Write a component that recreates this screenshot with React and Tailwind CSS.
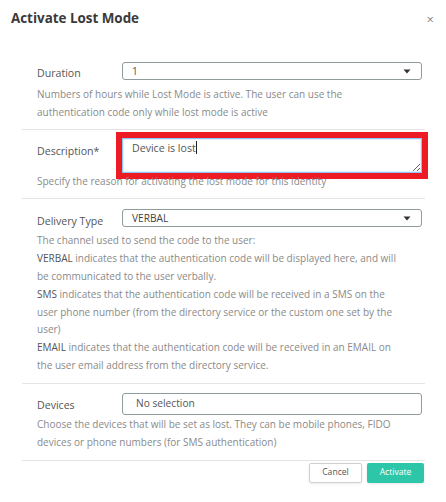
import React from "react";

function Caret() {
  return (
    <svg width="8" height="5" viewBox="0 0 8 5" className="shrink-0">
      <path d="M0.5 0.5 L7.5 0.5 L4 4.5 Z" fill="#333" />
    </svg>
  );
}

function Select({ value, bold }) {
  return (
    <div className="flex-1 h-[18px] border border-[#8e9c9c] rounded-[3px] flex items-center justify-between pl-[9px] pr-[10px] bg-white">
      <span className={`text-[10.2px] leading-[16px] ${bold ? "text-[#444]" : "text-[#555]"}`}>{value}</span>
      <Caret />
    </div>
  );
}

export default function App() {
  return (
    <div
      className="w-[446px] h-[502px] bg-white relative overflow-hidden"
      style={{ fontFamily: '"Open Sans", "Noto Sans", sans-serif' }}
    >
      {/* header */}
      <div className="h-[52px] flex items-start justify-between pl-[11px] pr-[12px] pt-[7px]">
        <h1 className="text-[13.4px] leading-[22px] font-bold text-[#3a3a3a]">Activate Lost Mode</h1>
        <span className="text-[13px] leading-[22px] text-[#888] mt-[1px]">×</span>
      </div>

      <div className="mx-[22px] mr-[21px] text-[10px] leading-[17.8px] text-[#8a8a8a]">
        {/* Duration */}
        <div className="pt-[10px] pb-[7px] pl-[15px] pr-[3px] border-b border-[#e4e4e4]">
          <div className="flex items-start">
            <div className="w-[85px] mt-[2px] text-[#555] text-[10.6px] leading-[18px]">Duration</div>
            <Select value="1" />
          </div>
          <p className="mt-[4px] pr-[14px]">
            Numbers of hours while Lost Mode is active. The user can use the authentication code only while lost mode is active
          </p>
        </div>

        {/* Description */}
        <div className="pt-[8px] pb-[8px] pl-[15px] pr-[3px] border-b border-[#e4e4e4]">
          <div className="flex items-start">
            <div className="w-[85px] mt-[4px] text-[#555] text-[10.6px] leading-[18px]">Description*</div>
            <div className="flex-1 h-[35px] border border-[#8ec5f5] rounded-none shadow-[inset_0_0_2px_#9fd0fb] outline-[6px] outline-solid outline-[#ed1c24] resize overflow-auto pl-[9px] pt-0 text-[10.6px] leading-[18px] text-[#555] bg-white">
              Device is lost<span className="inline-block w-[1px] h-[13px] bg-[#222] align-[-2px]"></span>
            </div>
          </div>
          <p className="mt-0 pr-[14px]">Specify the reason for activating the lost mode for this identity</p>
        </div>

        {/* Delivery Type */}
        <div className="pt-[10px] pb-[8px] pl-[15px] pr-[3px] border-b border-[#e4e4e4]">
          <div className="flex items-start">
            <div className="w-[85px] mt-[3px] text-[#555] text-[10.6px] leading-[18px]">Delivery Type</div>
            <Select value="VERBAL" bold />
          </div>
          <div className="mt-[2px] pr-[14px]">
            <p>The channel used to send the code to the user:</p>
            <p>
              <span className="text-[#555]">VERBAL</span> indicates that the authentication code will be displayed here, and will be communicated to the user verbally.
            </p>
            <p>
              <span className="text-[#555]">SMS</span> indicates that the authentication code will be received in a SMS on the user phone number (from the directory service or the custom one set by the user)
            </p>
            <p>
              <span className="text-[#555]">EMAIL</span> indicates that the authentication code will be received in an EMAIL on the user email address from the directory service.
            </p>
          </div>
        </div>

        {/* Devices */}
        <div className="pt-[9px] pb-[9px] pl-[15px] pr-[3px] border-b border-[#e4e4e4]">
          <div className="flex items-start">
            <div className="w-[85px] mt-[3px] text-[#555] text-[10.6px] leading-[18px]">Devices</div>
            <div className="flex-1 h-[22px] border border-[#8e9c9c] rounded-[3px] flex items-center pl-[13px] text-[#555] text-[10.2px] bg-white">
              No selection
            </div>
          </div>
          <p className="mt-[1px] pr-[14px]">
            Choose the devices that will be set as lost. They can be mobile phones, FIDO devices or phone numbers (for SMS authentication)
          </p>
        </div>

        {/* footer */}
        <div className="flex justify-end gap-[5px] pt-[2px] pr-[1px]">
          <button className="w-[53px] h-[20px] border border-[#d0d0d0] rounded-[2px] bg-white text-[8.6px] text-[#555] shadow-[0_1px_3px_rgba(0,0,0,0.08)]">
            Cancel
          </button>
          <button className="w-[57px] h-[20px] rounded-[2px] bg-[#2ec6a9] text-[8.6px] text-white shadow-[0_1px_3px_rgba(0,0,0,0.1)]">
            Activate
          </button>
        </div>
      </div>
    </div>
  );
}
